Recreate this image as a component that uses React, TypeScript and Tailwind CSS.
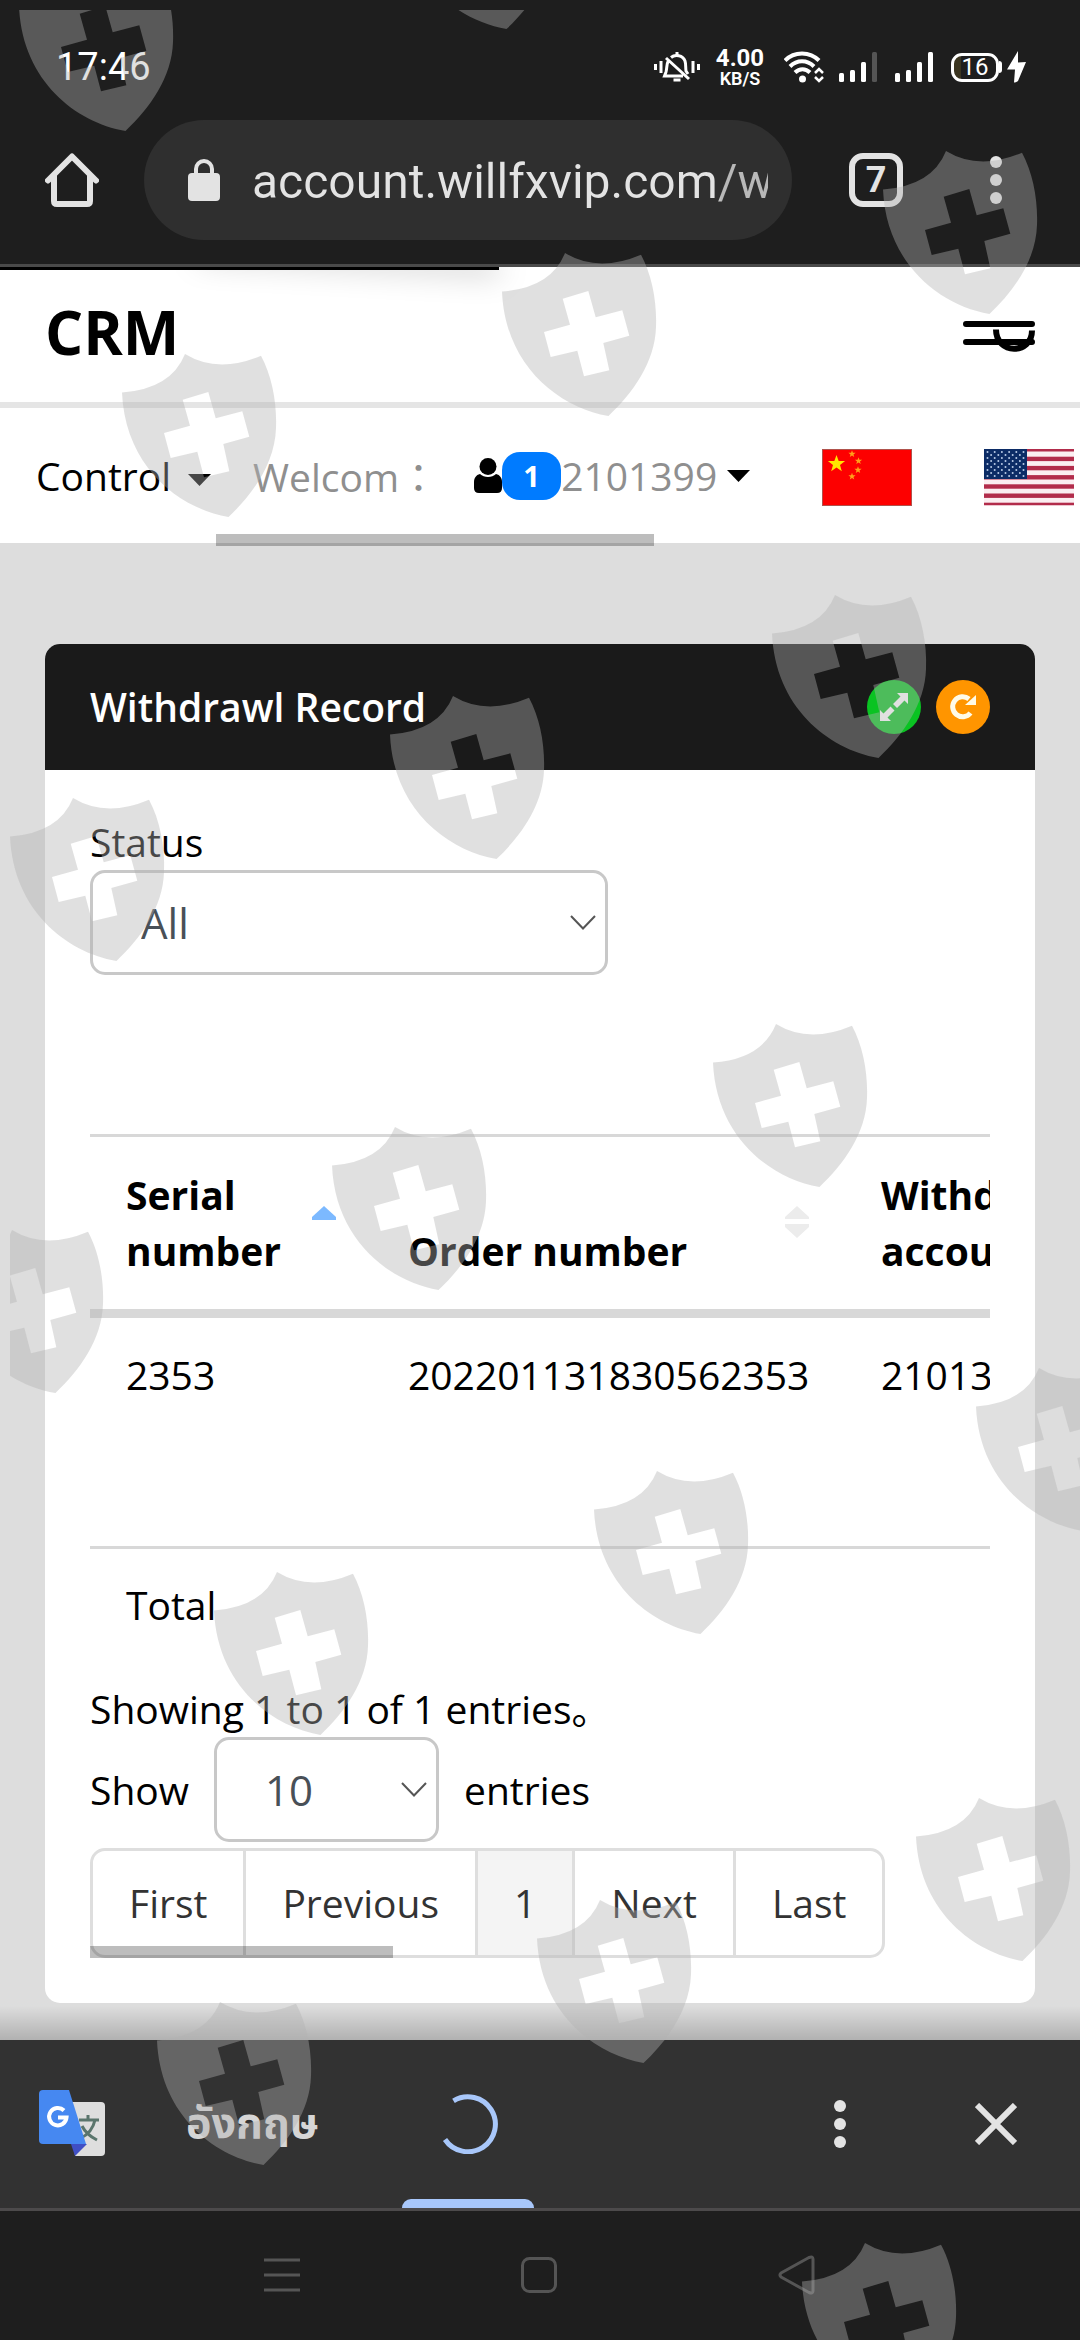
import React from "react";

const shields: [number, number][] = [
  [18, -33], [399, -135], [882, 150], [501, 252], [121, 353], [771, 594],
  [389, 695], [9, 797], [712, 1023], [331, 1126], [-52, 1229], [975, 1367],
  [593, 1470], [213, 1571], [915, 1797], [536, 1899], [156, 2001], [801, 2242],
];

function Watermark() {
  return (
    <div className="pointer-events-none absolute inset-0 top-[10px] left-[10px] overflow-hidden">
      <svg className="h-full w-full" aria-hidden="true">
        <defs>
          <path
            id="shield"
            fillRule="evenodd"
            d="M1 39.5Q50 36 64 1Q97 21 140 2.7C151 23 156 50 155 75C154 110 132 141 107.5 164C56 155 4 112 1 39.5ZM61.7 46.7L69 72.7L43 80L49.7 105L76.3 98.7L83 124.3L108.3 118.3L102.3 91L128.3 83.7L121.3 58.3L94.7 65.3L87.3 39Z"
          />
        </defs>
        {shields.map(([x, y]) => (
          <use key={`${x},${y}`} href="#shield" x={x - 10} y={y - 10} fill="#b2b2b2" fillOpacity="0.4" />
        ))}
      </svg>
    </div>
  );
}

function Signal({ weak = false }: { weak?: boolean }) {
  return (
    <svg width="38" height="30" viewBox="0 0 38 30" fill="#fff" aria-hidden="true">
      <rect x="0" y="21" width="5" height="9" rx="1.5" />
      <rect x="11" y="18" width="5" height="12" rx="1.5" />
      <rect x="22" y="10" width="5" height="20" rx="1.5" />
      <rect x="33" y="0" width="5" height="30" rx="1.5" fill={weak ? "#555" : "#fff"} />
    </svg>
  );
}

function StatusBar() {
  return (
    <div className="flex h-[120px] items-center justify-between pt-[14px] pr-[54px] pl-[56px] text-white">
      <span className="text-[38px] leading-[44px]">17:46</span>
      <div className="flex items-center">
        <svg width="46" height="32" viewBox="0 0 46 32" fill="none" stroke="#fff" strokeWidth="3" aria-hidden="true">
          <path d="M1.5 13v6M7 10v12M39 10v12M44.500 13v6" />
          <path d="M14 10.500C12.500 13 13 18 12 21L10.500 25H29M17 6.500C21 3 29 4 31 10C32 13 31.500 17 32 20L34 23M12 7L35 28" />
          <path d="M23 1v4M19.500 29h7" />
        </svg>
        <div className="ml-4 flex w-[48px] flex-col items-center">
          <span className="text-[24px] leading-[23px] font-bold">4.00</span>
          <span className="text-[18px] leading-[17px] font-semibold">KB/S</span>
        </div>
        <svg className="ml-[20px]" width="40" height="32" viewBox="0 0 40 32" fill="none" stroke="#fff" strokeWidth="4" aria-hidden="true">
          <path d="M1 9.500C10 0 26 0 35 9.500M6 15.500C13 8.500 23 8.500 30 15.500M11 21.500C15.500 17 21.500 17 26 21.500" />
          <circle cx="18.500" cy="28" r="3.500" fill="#fff" stroke="none" />
          <path d="M31 22l4-4l4 4M31 26l4 4l4-4" strokeWidth="2.500" />
        </svg>
        <div className="ml-[15px] flex gap-[18px]">
          <Signal weak />
          <Signal />
        </div>
        <div className="ml-[18px] flex items-center">
          <div className="flex h-[29px] w-[48px] items-center justify-center rounded-[11px] border-3 border-white bg-[linear-gradient(to_right,#3b3520_16%,transparent_16%)] text-[24px] leading-[24px]">
            16
          </div>
          <div className="h-[12px] w-[3px] rounded-r-sm bg-white" />
        </div>
        <svg className="ml-[5px]" width="19" height="32" viewBox="0 0 19 32" fill="#fff" aria-hidden="true">
          <path d="M11 0L0 18.500L8 18.500L7 31.500Q8 32 11 30L19 11L11 11.500Z" />
        </svg>
      </div>
    </div>
  );
}

function Dots() {
  return (
    <svg width="12" height="48" viewBox="0 0 12 48" fill="#e3e3e3" aria-hidden="true">
      <circle cx="6" cy="6" r="6" />
      <circle cx="6" cy="24" r="6" />
      <circle cx="6" cy="42" r="6" />
    </svg>
  );
}

function AddressBar() {
  return (
    <div className="flex h-[144px] items-start pr-[78px] pl-[45px]">
      <button aria-label="Home" className="flex h-[120px] w-[54px] items-center justify-center">
        <svg width="54" height="54" viewBox="0 0 54 54" fill="none" stroke="#e3e3e3" strokeWidth="6" strokeLinecap="round" strokeLinejoin="round" aria-hidden="true">
          <path d="M3 27.500L27 3.500L51 27.500M9 23V48Q9 51 12 51H42Q45 51 45 48V23" />
        </svg>
      </button>
      <div className="ml-[45px] flex h-[120px] min-w-0 flex-1 items-center rounded-full bg-[#2f2f2f] pr-[24px] pl-[44px]">
        <svg className="shrink-0" width="32" height="44" viewBox="0 0 32 44" aria-hidden="true">
          <rect x="0" y="15" width="32" height="28" rx="4" fill="#e3e3e3" />
          <path d="M8 16V11a8 8 0 0 1 16 0v5" fill="none" stroke="#e3e3e3" strokeWidth="4" />
        </svg>
        <input
          aria-label="Address"
          readOnly
          value="account.willfxvip.com/w"
          className="ml-[32px] h-[74px] min-w-0 flex-1 bg-[linear-gradient(to_right,#e3e3e3_90%,#b8b8b8_91%)] bg-clip-text pt-[2px] text-[48px] text-transparent outline-none"
        />
      </div>
      <button aria-label="Tabs" className="ml-[57px] flex h-[120px] items-center">
        <span className="flex h-[54px] w-[54px] items-center justify-center rounded-[14px] border-6 border-[#e3e3e3] text-[36px] leading-[42px] font-bold text-[#e3e3e3]">7</span>
      </button>
      <button aria-label="Menu" className="ml-[87px] flex h-[120px] items-center">
        <Dots />
      </button>
    </div>
  );
}

function Caret() {
  return (
    <svg width="23" height="12" viewBox="0 0 23 12" aria-hidden="true">
      <path d="M0 0H23L11.500 12Z" fill="#000" />
    </svg>
  );
}

const bigStar = "M0 -9L2.200 -3H8.600L3.500 1L5.300 7.300L0 3.600L-5.300 7.300L-3.500 1L-8.600 -3H-2.200Z";

function ChinaFlag() {
  return (
    <svg width="90" height="57" viewBox="0 0 90 57" role="img" aria-label="中文">
      <rect width="90" height="57" fill="#fd0000" />
      <rect x="0.500" y="0.500" width="89" height="56" fill="none" stroke="#b0524c" />
      <path d={bigStar} transform="translate(14.500 15)" fill="#ffe600" />
      <g fill="#ffa01a">
        <path d={bigStar} transform="translate(30 5) scale(.42)" />
        <path d={bigStar} transform="translate(36.500 12) scale(.42)" />
        <path d={bigStar} transform="translate(36 21) scale(.42)" />
        <path d={bigStar} transform="translate(30 27.500) scale(.42)" />
      </g>
    </svg>
  );
}

function UsFlag() {
  return (
    <svg width="90" height="57" viewBox="0 0 90 57" role="img" aria-label="English">
      <rect width="90" height="57" fill="#fbeef1" />
      {[0, 1, 2, 3, 4, 5, 6].map((i) => (
        <rect key={i} y={i === 0 ? 0 : i * 9.200 - 1.500} width="90" height={i === 0 || i === 6 ? 2.500 : 4.400} fill="#b22c4b" />
      ))}
      <rect width="43" height="30" fill="#0c2c66" />
      <g fill="#b9cbe6">
        {[0, 1, 2, 3, 4, 5, 6, 7, 8].map((r) =>
          (r % 2 ? [1, 2, 3, 4, 5] : [0, 1, 2, 3, 4, 5]).map((c) => (
            <circle key={`${r}-${c}`} cx={3.500 + c * 7.200 - (r % 2 ? 3.600 : 0)} cy={3 + r * 3} r="1" />
          )),
        )}
      </g>
    </svg>
  );
}

function SiteHeader() {
  return (
    <header className="bg-white">
      <div className="relative flex h-[141px] items-center justify-between overflow-hidden border-b-6 border-[#e5e5e5] pr-[45px] pl-[45px]">
        <div className="absolute top-0 left-0 h-[3px] w-[46.200%] bg-black">
          <div className="absolute right-0 h-full w-[300px] -translate-y-2 rotate-3 shadow-[0_0_30px_#000]" />
        </div>
        <h1 className="pb-[6px] text-[60px] leading-[80px] font-bold text-black">CRM</h1>
        <button aria-label="Toggle menu" className="pt-1">
          <svg width="72" height="32" viewBox="0 0 72 32" fill="none" stroke="#000" strokeWidth="6" aria-hidden="true">
            <path d="M3 3H69M3 21H69" strokeLinecap="round" />
            <path d="M33 8.500C33 34 69 34 69 9.500" />
          </svg>
        </button>
      </div>
      <nav className="relative flex h-[135px] items-center overflow-hidden pl-[36px] text-[39px] leading-[56px] whitespace-nowrap">
        <button className="flex shrink-0 items-center gap-[17px] text-black">
          Control <span className="pt-2"><Caret /></span>
        </button>
        <div className="ml-[42px] shrink-0 text-[#8f8f8f]">
          Welcom<span className="font-[Noto_Sans_CJK_TC,sans-serif]" lang="zh-Hant">：</span>
        </div>
        <button className="ml-[36px] flex shrink-0 items-center text-[#8f8f8f]">
          <svg width="28" height="35" viewBox="0 0 28 35" fill="#000" aria-hidden="true">
            <circle cx="14" cy="8.500" r="8.500" />
            <path d="M6 16C10 20 18 20 22 16C26 17 28 20 28 24V30Q28 35 23 35H5Q0 35 0 30V24C0 20 2 17 6 16Z" />
          </svg>
          <span className="flex h-[48px] w-[59px] items-center justify-center rounded-[18px] bg-[#007bff] text-[29px] leading-[40px] font-bold text-white">1</span>
          2101399
          <span className="ml-[10px]"><Caret /></span>
        </button>
        <a href="#zh" className="ml-[72px] shrink-0 pt-1"><ChinaFlag /></a>
        <a href="#en" className="ml-[72px] shrink-0 pt-1"><UsFlag /></a>
      </nav>
    </header>
  );
}

function Select({ id, options, className }: { id: string; options: string[]; className: string }) {
  return (
    <div className={`relative ${className}`}>
      <select
        id={id}
        className="h-[105px] w-full appearance-none rounded-[15px] border-3 border-[#c8c8c8] bg-white pl-[48px] text-[42px] text-[#495057]"
      >
        {options.map((o) => (
          <option key={o}>{o}</option>
        ))}
      </select>
      <svg className="pointer-events-none absolute top-[45px] right-[12px]" width="26" height="15" viewBox="0 0 26 15" fill="none" stroke="#555" strokeWidth="2" aria-hidden="true">
        <path d="M1 1L13 13.500L25 1" />
      </svg>
    </div>
  );
}

function RecordTable() {
  return (
    <div className="overflow-hidden">
      <table className="w-[1300px] table-fixed border-collapse text-left">
        <colgroup>
          <col className="w-[282px]" />
          <col className="w-[473px]" />
          <col />
        </colgroup>
        <thead>
          <tr className="border-t-3 border-b-9 border-[#d8d8d8] align-bottom">
            <th className="relative px-[36px] pt-[30px] pb-[30px] font-bold">
              <span className="block w-[160px]">Serial number</span>
              <svg className="absolute top-[69px] right-[36px]" width="24" height="14" viewBox="0 0 24 14" aria-hidden="true">
                <path d="M12 0L24 11V14H0V11Z" fill="#7cb9ff" />
              </svg>
            </th>
            <th className="relative px-[36px] pt-[30px] pb-[30px] font-bold">
              Order number
              <svg className="absolute top-[69px] right-[36px]" width="24" height="32" viewBox="0 0 24 32" fill="#ececec" aria-hidden="true">
                <path d="M12 0L24 11V13H0V11ZM0 18H24V21L12 32L0 21Z" />
              </svg>
            </th>
            <th className="px-[36px] pt-[30px] pb-[30px] font-bold">
              Withdrawl
              <br />
              account
            </th>
          </tr>
        </thead>
        <tbody>
          <tr className="h-[234px] border-b-3 border-[#d8d8d8] align-top">
            <td className="px-[36px] pt-[29px]">2353</td>
            <td className="px-[36px] pt-[29px]">202201131830562353</td>
            <td className="px-[36px] pt-[29px]">2101399</td>
          </tr>
        </tbody>
        <tfoot>
          <tr>
            <td className="px-[36px] pt-[28px] pb-[48px]" colSpan={3}>Total</td>
          </tr>
        </tfoot>
      </table>
    </div>
  );
}

function Pagination() {
  return (
    <div className="relative mt-[6px] flex">
      <div className="flex h-[110px] overflow-hidden rounded-[15px] border-3 border-[#dedede] text-[#333]">
        <button className="px-[36px]">First</button>
        <button className="border-l-3 border-[#dedede] px-[36px]">Previous</button>
        <button aria-current="page" className="border-l-3 border-[#dedede] bg-[#f4f4f4] px-[36px]">1</button>
        <button className="border-l-3 border-[#dedede] px-[36px]">Next</button>
        <button className="border-l-3 border-[#dedede] px-[36px]">Last</button>
      </div>
      <div className="absolute bottom-0 left-0 h-[12px] w-[303px] bg-black/26" />
    </div>
  );
}

function RecordCard() {
  return (
    <section className="overflow-hidden rounded-[15px] bg-white text-[39px] leading-[56px] text-black">
      <div className="flex h-[126px] items-center bg-[#1a1a1a] pr-[45px] pl-[45px]">
        <h2 className="flex-1 text-[39px] font-semibold text-white">Withdrawl Record</h2>
        <button aria-label="Expand" className="flex h-[54px] w-[54px] items-center justify-center rounded-full bg-[#0ac322]">
          <svg width="28" height="28" viewBox="0 0 28 28" fill="#fff" aria-hidden="true">
            <path d="M17 0H28V11L24.500 7.500L17 15L13 11L20.500 3.500ZM11 28H0V17L3.500 20.500L10.500 13.500L14.500 17.500L7.500 24.500Z" />
          </svg>
        </button>
        <button aria-label="Reload" className="ml-[15px] flex h-[54px] w-[54px] items-center justify-center rounded-full bg-[#ff9500]">
          <svg width="28" height="28" viewBox="0 0 28 28" fill="none" stroke="#fffbe8" strokeWidth="5" aria-hidden="true">
            <path d="M21.500 20A10 10 0 1 1 20 6" />
            <path d="M27 2V12H16Z" fill="#fffbe8" stroke="none" />
          </svg>
        </button>
      </div>
      <div className="px-[45px] pt-[44px] pb-[45px]">
        <label htmlFor="status" className="block">Status</label>
        <Select id="status" options={["All"]} className="w-[518px]" />
        <div className="mt-[159px]">
          <RecordTable />
        </div>
        <p className="whitespace-nowrap">Showing 1 to 1 of 1 entries。</p>
        <div className="flex items-center">
          <label htmlFor="page-size">Show</label>
          <Select id="page-size" options={["10"]} className="mx-[25px] w-[225px]" />
          <span>entries</span>
        </div>
        <Pagination />
      </div>
    </section>
  );
}

function TranslateIcon() {
  return (
    <svg width="66" height="68" viewBox="0 0 66 68" aria-hidden="true">
      <path d="M33 12H62Q66 12 66 16V62Q66 66 62 66H36Z" fill="#dedede" />
      <path d="M32 54H48L36 66Z" fill="#3f4fc4" />
      <path d="M40 30H60M49 25V30M42 48C50 44 54 39 56 30M43 36C46 42 52 47 58 50" fill="none" stroke="#5a756c" strokeWidth="3" />
      <path d="M4 0H30L47 54H4Q0 54 0 50V4Q0 0 4 0Z" fill="#4688f1" />
      <path d="M25 20.500A8.700 8.700 0 1 0 27.500 27.500H19" fill="none" stroke="#fff" strokeWidth="4" />
    </svg>
  );
}

function TranslateBar() {
  return (
    <div className="relative flex h-[171px] items-stretch border-b-3 border-[#4c4a4b] bg-[#323232] pr-[63px] pl-[39px]">
      <div className="absolute inset-x-0 -top-[34px] h-[34px] bg-linear-to-b from-transparent to-black/20" />
      <div className="flex items-center"><TranslateIcon /></div>
      <button className="ml-[81px] w-[132px] pt-[3px] text-center font-[Noto_Sans_Thai,Roboto,sans-serif] text-[43px] font-bold whitespace-nowrap text-[#d6d6d6]">อังกฤษ</button>
      <button aria-label="Translating" className="ml-[84px] flex w-[132px] flex-col items-center">
        <span className="flex flex-1 items-center pt-[9px]">
          <svg width="60" height="60" viewBox="0 0 60 60" fill="none" stroke="#a8c7fa" strokeWidth="5" aria-hidden="true">
            <path d="M15.500 6.800A27.500 27.500 0 1 1 7 45.500" />
          </svg>
        </span>
        <span className="h-[9px] w-full rounded-t-[9px] bg-[#a8c7fa]" />
      </button>
      <div className="flex-1" />
      <button aria-label="Options"><Dots /></button>
      <button aria-label="Close" className="ml-[129px]">
        <svg width="42" height="42" viewBox="0 0 42 42" fill="none" stroke="#e3e3e3" strokeWidth="6" aria-hidden="true">
          <path d="M2 2L40 40M40 2L2 40" />
        </svg>
      </button>
    </div>
  );
}

function SystemNav() {
  return (
    <div className="flex h-[129px] items-center justify-center gap-[221px] bg-[#1e1e1e] pb-[2px] text-[#555]">
      <button aria-label="Recent apps">
        <svg width="36" height="36" viewBox="0 0 36 36" fill="none" stroke="currentColor" strokeWidth="3" aria-hidden="true">
          <path d="M0 3H36M0 18H36M0 33H36" />
        </svg>
      </button>
      <button aria-label="Home screen">
        <svg width="36" height="38" viewBox="0 0 36 38" fill="none" stroke="currentColor" strokeWidth="3" aria-hidden="true">
          <rect x="1.500" y="2.500" width="33" height="33" rx="7" />
        </svg>
      </button>
      <button aria-label="Back">
        <svg width="38" height="40" viewBox="0 0 38 40" fill="none" stroke="currentColor" strokeWidth="3" strokeLinejoin="round" aria-hidden="true">
          <path d="M3 18Q1 20 3 22L31 37.500Q35 39 35 36V4Q35 1 31 2.500Z" />
        </svg>
      </button>
    </div>
  );
}

export default function App() {
  return (
    <div className="relative flex min-h-screen flex-col overflow-hidden bg-[#dddddd] font-[Open_Sans,Noto_Sans_CJK_SC,sans-serif]">
      <div className="border-b-3 border-[#4a4a4a] bg-[#1e1e1e] font-[Roboto,sans-serif]">
        <StatusBar />
        <AddressBar />
      </div>
      <SiteHeader />
      <main className="relative flex-1 px-[45px] pt-[101px] pb-[37px]">
        <div className="absolute -top-[9px] left-[20%] h-[12px] w-[438px] bg-black/26" />
        <RecordCard />
      </main>
      <TranslateBar />
      <SystemNav />
      <Watermark />
    </div>
  );
}
